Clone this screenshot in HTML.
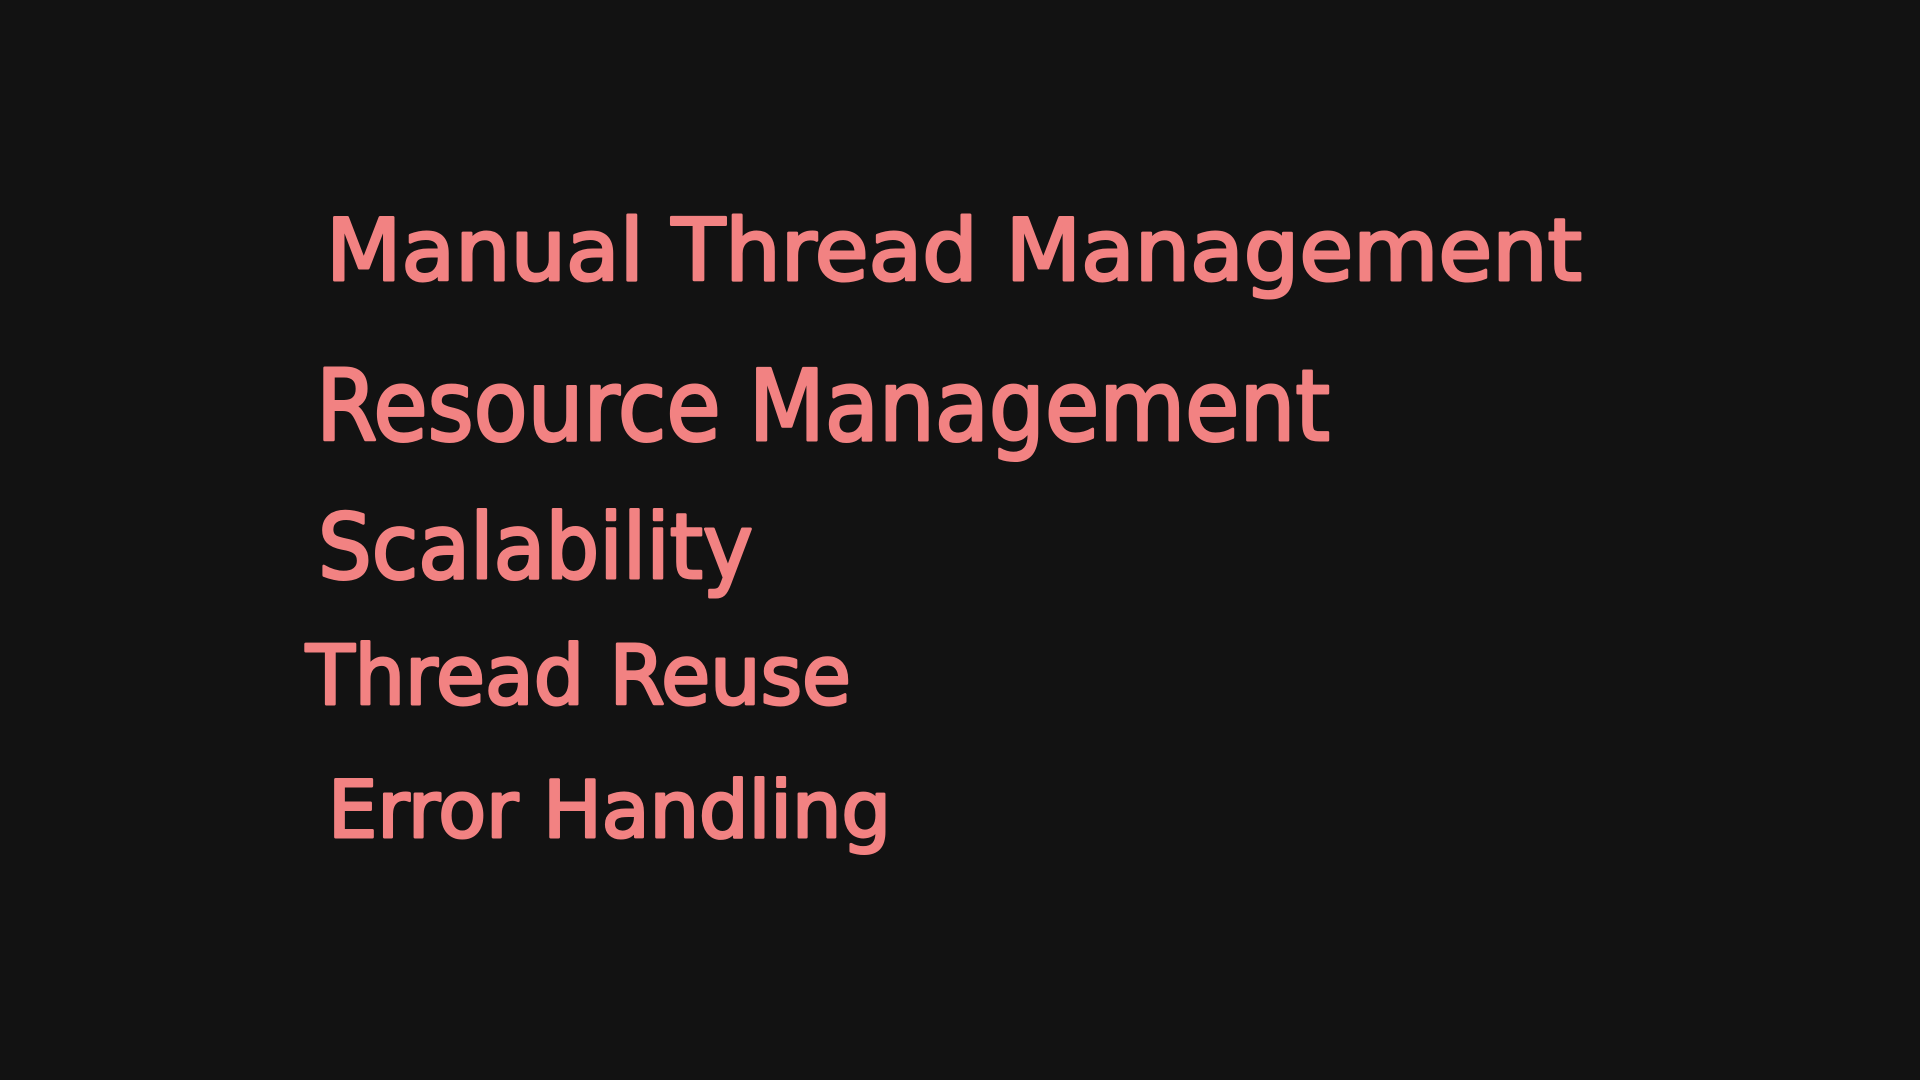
<!DOCTYPE html>
<html><head><meta charset="utf-8"><style>
html,body{margin:0;padding:0;background:#121212;width:1920px;height:1080px;overflow:hidden}
svg{display:block}
text{fill:#f28282;stroke:#f28282;stroke-width:3;stroke-linejoin:round;font-family:"Comic Sans MS","DejaVu Sans","Liberation Sans",sans-serif;}
</style></head><body>
<svg width="1920" height="1080" viewBox="0 0 1920 1080">
<rect width="1920" height="1080" fill="#121212"/>
<text x="326" y="280" font-size="86" textLength="1256" lengthAdjust="spacingAndGlyphs">Manual Thread Management</text>
<text x="316" y="440" font-size="98" textLength="1014" lengthAdjust="spacingAndGlyphs">Resource Management</text>
<text x="318" y="578" font-size="90" textLength="435" lengthAdjust="spacingAndGlyphs">Scalability</text>
<text x="306" y="704" font-size="82" textLength="545" lengthAdjust="spacingAndGlyphs">Thread Reuse</text>
<text x="328" y="837" font-size="78" textLength="563" lengthAdjust="spacingAndGlyphs">Error Handling</text>
</svg>
</body></html>
